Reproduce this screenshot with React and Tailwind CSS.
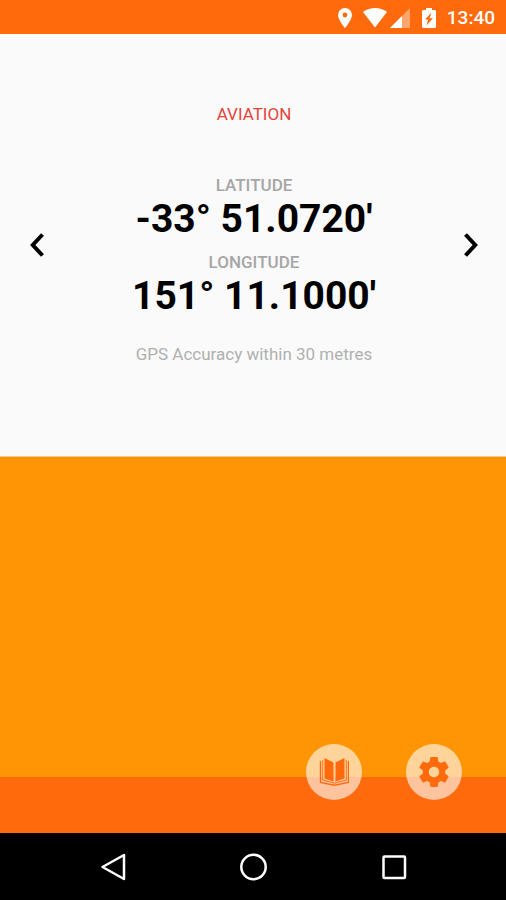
import React from 'react';

const coordinates = [
  { label: 'LATITUDE', value: "-33° 51.0720'" },
  { label: 'LONGITUDE', value: "151° 11.1000'" },
];

function StatusBar() {
  return (
    <header className="flex h-[34px] shrink-0 items-center justify-end bg-[#ff6a0c] pr-[11px] pt-px text-white">
      <svg className="mr-[11px] h-5 w-[14px]" viewBox="0 0 14 20" fill="currentColor">
        <path fillRule="evenodd" d="M7 0a7 7 0 0 0-7 7c0 5 7 13 7 13s7-8 7-13a7 7 0 0 0-7-7Zm0 4.600a2.400 2.400 0 1 1 0 4.800a2.400 2.400 0 0 1 0-4.800Z" />
      </svg>
      <svg className="mr-[3px] h-5 w-6" viewBox="0 0 24 20" fill="currentColor">
        <path d="M0 4C7-1.300 17-1.300 24 4L12 19.500Z" />
      </svg>
      <svg className="mr-3 h-5 w-5" viewBox="0 0 20 20" fill="currentColor">
        <path d="M0 20 20 0v20Z" opacity="0.4" />
        <path d="M0 20 12 8v12Z" />
      </svg>
      <svg className="mr-[11px] h-5 w-[14px]" viewBox="0 0 14 20">
        <path fill="currentColor" d="M4 0h6v2H13l1 1v16l-1 1H1l-1-1V3l1-1h3Z" />
        <path fill="#ff6a0c" d="M9.500 4.500 3 11.500h3.200L4.500 17.500 11 10.200H7.600Z" />
      </svg>
      <span className="text-[19px] leading-6 font-medium">13:40</span>
    </header>
  );
}

function ArrowButton({ label, path }) {
  return (
    <button type="button" aria-label={label} className="flex h-12 w-12 shrink-0 items-center justify-center text-black">
      <svg className="h-6 w-[14px]" viewBox="0 0 14 24" fill="none" stroke="currentColor" strokeWidth="4">
        <path d={path} />
      </svg>
    </button>
  );
}

function LocationPanel() {
  return (
    <section className="flex shrink-0 items-center justify-between border-b border-[#ffc992] bg-[#fafafa] pr-[11px] pl-[13px]">
      <ArrowButton label="Previous format" path="M12.500 1.500 2.800 12l9.700 10.500" />
      <div className="flex flex-col items-center pt-[68px] pb-[90px] text-center">
        <h1 className="text-[17px] leading-6 text-[#e5443a]">AVIATION</h1>
        <dl className="mt-[47px] flex flex-col gap-[11px]">
          {coordinates.map((item) => (
            <div key={item.label}>
              <dt className="text-[17px] leading-6 font-medium text-[#a6a6a6]">{item.label}</dt>
              <dd className="pt-0.5 text-[39px] leading-10 font-bold whitespace-nowrap text-black">{item.value}</dd>
            </div>
          ))}
        </dl>
        <p className="mt-[26px] text-[17px] leading-6 text-[#b0b0b0]">GPS Accuracy within 30 metres</p>
      </div>
      <ArrowButton label="Next format" path="M1.500 1.500 11.200 12l-9.700 10.500" />
    </section>
  );
}

function RoundButton({ label, children }) {
  return (
    <button
      type="button"
      aria-label={label}
      className="flex h-14 w-14 items-center justify-center rounded-full bg-white/60 text-[#ff6a0c]"
    >
      {children}
    </button>
  );
}

function BottomBar() {
  return (
    <div className="relative h-14 shrink-0 bg-[#ff6a0c]">
      {/* Buttons straddle the edge of the bar */}
      <div className="absolute -top-[33px] right-11 flex gap-11">
        <RoundButton label="Saved places">
          <svg className="h-7 w-[30px]" viewBox="0 0 30 28" fill="currentColor">
            <path d="M5.500 0 14.500 4.500V23.500L5.500 20.500ZM25.500 0 16.500 4.500V23.500l9-3Z" />
            <path
              d="M3.700 2v20L15.500 25.200l11.800-3.200V2"
              fill="none"
              stroke="currentColor"
              strokeWidth="0.900"
            />
            <path
              d="M1.500 3v21.500l14 2.700 14-2.700V3"
              fill="none"
              stroke="currentColor"
              strokeWidth="1.400"
            />
          </svg>
        </RoundButton>
        <RoundButton label="Settings">
          <svg className="h-9 w-9" viewBox="0 0 24 24" fill="currentColor">
            <path d="M19.430 12.980c.040-.320.070-.640.070-.980s-.030-.660-.070-.980l2.110-1.650c.190-.150.240-.420.120-.640l-2-3.460c-.120-.220-.390-.300-.610-.220l-2.490 1c-.520-.400-1.080-.730-1.690-.980l-.380-2.650C14.460 2.180 14.250 2 14 2h-4c-.250 0-.460.180-.490.420l-.380 2.650c-.610.250-1.170.590-1.690.980l-2.490-1c-.230-.090-.490 0-.610.220l-2 3.460c-.130.220-.070.490.120.640l2.110 1.650c-.040.320-.070.650-.070.980s.030.660.070.980l-2.110 1.650c-.190.150-.240.420-.120.640l2 3.460c.120.220.390.300.610.220l2.490-1c.520.400 1.080.730 1.690.980l.380 2.650c.030.240.240.420.490.420h4c.250 0 .460-.180.490-.420l.380-2.650c.610-.250 1.170-.590 1.690-.980l2.490 1c.230.090.490 0 .610-.220l2-3.460c.120-.220.070-.490-.120-.640l-2.110-1.650zM12 15.500c-1.930 0-3.500-1.570-3.500-3.500s1.570-3.500 3.500-3.500 3.500 1.570 3.500 3.500-1.570 3.500-3.500 3.500z" />
          </svg>
        </RoundButton>
      </div>
    </div>
  );
}

function NavigationBar() {
  return (
    <nav className="flex h-[67px] shrink-0 items-center justify-center gap-[84px] bg-black pl-0.5 text-white">
      <button type="button" aria-label="Back" className="flex h-12 w-14 items-center justify-center">
        <svg className="h-7 w-7" viewBox="0 0 28 28" fill="none" stroke="currentColor" strokeWidth="2.500" strokeLinejoin="round">
          <path d="M24 2v24L2.500 14Z" />
        </svg>
      </button>
      <button type="button" aria-label="Home" className="flex h-12 w-14 items-center justify-center">
        <svg className="h-7 w-7" viewBox="0 0 28 28" fill="none" stroke="currentColor" strokeWidth="2.500">
          <circle cx="13.500" cy="14" r="12.200" />
        </svg>
      </button>
      <button type="button" aria-label="Recent apps" className="flex h-12 w-14 items-center justify-center">
        <svg className="h-7 w-7" viewBox="0 0 28 28" fill="none" stroke="currentColor" strokeWidth="2.500">
          <rect x="3.500" y="3.500" width="21.500" height="21.500" rx="1" />
        </svg>
      </button>
    </nav>
  );
}

export default function App() {
  return (
    <div className="flex min-h-screen flex-col bg-[#ff9505] font-['Roboto',sans-serif]">
      <StatusBar />
      <main className="flex flex-1 flex-col">
        <LocationPanel />
        <div className="flex-1" />
        <BottomBar />
      </main>
      <NavigationBar />
    </div>
  );
}
